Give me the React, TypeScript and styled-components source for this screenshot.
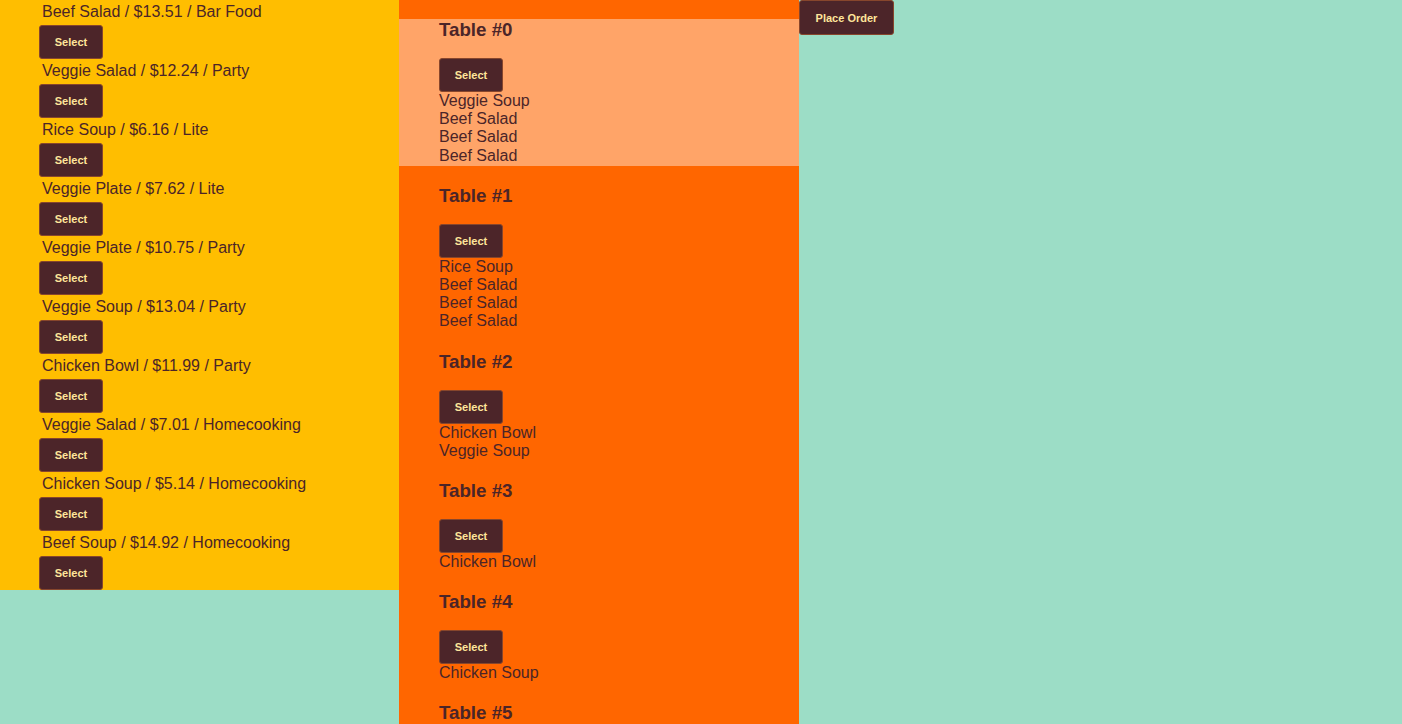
import React from "react";
import styled, { createGlobalStyle } from "styled-components";

const Global = createGlobalStyle`
  html, body { margin: 0; padding: 0; overflow: hidden; }
  body {
    background: #9cddc6;
    font-family: "Liberation Sans", Arial, Helvetica, sans-serif;
    color: #4b2528;
  }
`;

const Page = styled.div`
  display: flex;
  align-items: flex-start;
  width: 1402px;
`;

const MenuColumn = styled.div`
  width: 399px;
  background: #ffbe00;
  padding: 3px 0 0 39px;
  box-sizing: border-box;
  display: flex;
  flex-direction: column;
  gap: 3px;
`;

const MenuItem = styled.div`
  display: flex;
  flex-direction: column;
  align-items: flex-start;
`;

const ItemText = styled.div`
  font-size: 16px;
  line-height: 18px;
  padding-left: 3px;
  white-space: nowrap;
`;

const Button = styled.button<{ $w?: number; $h?: number }>`
  width: ${(p) => p.$w ?? 64}px;
  height: ${(p) => p.$h ?? 34}px;
  padding: 0;
  margin: 0;
  background: #4c2529;
  border: 1px solid #87462c;
  border-radius: 3px;
  color: #ffe59b;
  font-family: "Liberation Sans", Arial, Helvetica, sans-serif;
  font-weight: bold;
  font-size: 11px;
  cursor: pointer;
`;

const MenuButton = styled(Button)`
  margin-top: 4px;
`;

const TablesColumn = styled.div`
  width: 400px;
  min-height: 900px;
  background: #ff6600;
  display: flex;
  flex-direction: column;
  gap: 19px;
  padding-top: 19px;
  box-sizing: border-box;
`;

const TablePanel = styled.div<{ $active?: boolean }>`
  background: ${(p) => (p.$active ? "#ffa468" : "transparent")};
  padding: 0 0 1px 40px;
  display: flex;
  flex-direction: column;
  align-items: flex-start;
`;

const TableTitle = styled.h3`
  margin: 0 0 18px;
  font-size: 18.72px;
  line-height: 21px;
  font-weight: bold;
`;

const OrderLine = styled.div`
  font-size: 16px;
  line-height: 18.2px;
`;

const OrderColumn = styled.div`
  display: flex;
  align-items: flex-start;
`;

const menu = [
  "Beef Salad / $13.51 / Bar Food",
  "Veggie Salad / $12.24 / Party",
  "Rice Soup / $6.16 / Lite",
  "Veggie Plate / $7.62 / Lite",
  "Veggie Plate / $10.75 / Party",
  "Veggie Soup / $13.04 / Party",
  "Chicken Bowl / $11.99 / Party",
  "Veggie Salad / $7.01 / Homecooking",
  "Chicken Soup / $5.14 / Homecooking",
  "Beef Soup / $14.92 / Homecooking",
];

const tables: string[][] = [
  ["Veggie Soup", "Beef Salad", "Beef Salad", "Beef Salad"],
  ["Rice Soup", "Beef Salad", "Beef Salad", "Beef Salad"],
  ["Chicken Bowl", "Veggie Soup"],
  ["Chicken Bowl"],
  ["Chicken Soup"],
  ["Rice Soup"],
];

export default function App() {
  return (
    <>
      <Global />
      <Page>
        <MenuColumn>
          {menu.map((m, i) => (
            <MenuItem key={i}>
              <ItemText>{m}</ItemText>
              <MenuButton>Select</MenuButton>
            </MenuItem>
          ))}
        </MenuColumn>
        <TablesColumn>
          {tables.map((items, i) => (
            <TablePanel key={i} $active={i === 0}>
              <TableTitle>Table #{i}</TableTitle>
              <Button>Select</Button>
              {items.map((it, j) => (
                <OrderLine key={j}>{it}</OrderLine>
              ))}
            </TablePanel>
          ))}
        </TablesColumn>
        <OrderColumn>
          <Button $w={95} $h={35}>Place Order</Button>
        </OrderColumn>
      </Page>
    </>
  );
}
